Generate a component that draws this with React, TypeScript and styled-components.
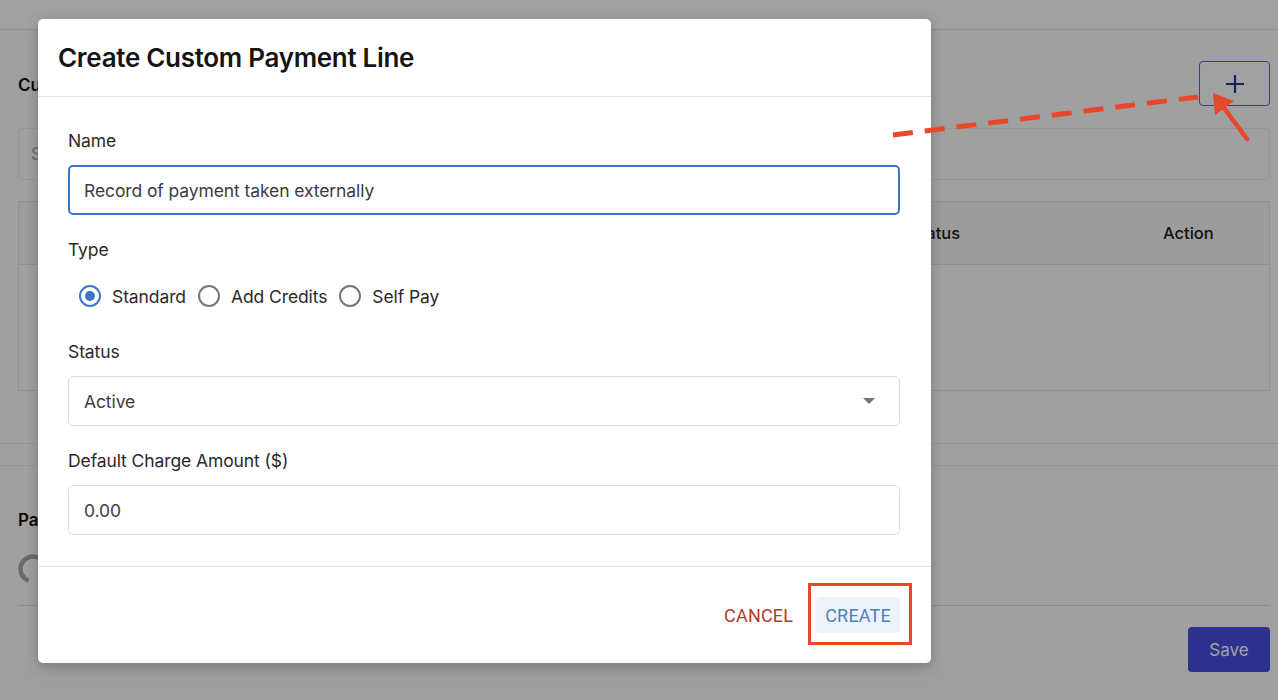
import React from "react";
import styled, { createGlobalStyle } from "styled-components";

const Global = createGlobalStyle`
  html, body { margin: 0; padding: 0; }
  body { font-family: Inter, "Noto Sans", sans-serif; background: #fff; }
  #root { width: 1278px; height: 700px; overflow: hidden; position: relative; }
`;

const Page = styled.div`
  width: 1278px;
  height: 700px;
  background: #fcfcfc;
  display: flex;
  flex-direction: column;
  color: #111;
`;

const TopBar = styled.div`
  height: 29px;
  flex: none;
  background: #ffffff;
  border-bottom: 1px solid #e6e6e6;
`;

const Section = styled.section<{ $pt: number; $pb: number }>`
  padding: ${(p) => p.$pt}px 8px ${(p) => p.$pb}px 18px;
  display: flex;
  flex-direction: column;
  background: #fdfdfd;
`;

const Band = styled.div`
  height: 21px;
  background: #fefefe;
  border-top: 1px solid #ececec;
  border-bottom: 1px solid #ececec;
`;

const HeadRow = styled.div`
  display: flex;
  align-items: center;
  justify-content: space-between;
  height: 45px;
`;

const SectionTitle = styled.div`
  font-size: 17px;
  font-weight: 600;
  margin-top: 2px;
`;

const PlusButton = styled.button`
  width: 71px;
  height: 45px;
  border: 1px solid #5a66d8;
  border-radius: 4px;
  background: #fff;
  display: flex;
  align-items: center;
  justify-content: center;
  padding: 0;
  color: #2b2f9e;
`;

const Search = styled.div`
  margin-top: 22px;
  height: 52px;
  box-sizing: border-box;
  border: 1px solid #ececec;
  border-radius: 3px;
  background: #fefefe;
  display: flex;
  align-items: center;
  padding-left: 12px;
  font-size: 17px;
  color: #aaa;
`;

const Table = styled.div`
  margin-top: 21px;
  height: 190px;
  box-sizing: border-box;
  border: 1px solid #e4e4e4;
  display: flex;
  flex-direction: column;
`;

const TableHead = styled.div`
  height: 62px;
  background: #f7f7f7;
  border-bottom: 1px solid #e6e6e6;
  display: grid;
  grid-template-columns: 1fr 253px 106px;
  align-items: center;
  font-size: 16.5px;
  font-weight: 500;
  color: #222;
`;

const SpinnerRow = styled.div`
  margin-top: 24px;
  height: 30px;
  display: flex;
  align-items: center;
`;

const Divider = styled.div`
  margin-top: 21px;
  border-top: 1px solid #e0e0e0;
`;

const SaveRow = styled.div`
  margin-top: 21px;
  display: flex;
  justify-content: flex-end;
`;

const SaveButton = styled.button`
  width: 82px;
  height: 45px;
  border: none;
  border-radius: 4px;
  background: #474ee2;
  color: #fff;
  font-family: Inter, sans-serif;
  font-size: 17px;
`;

const Overlay = styled.div`
  position: absolute;
  inset: 0;
  background: rgba(0, 0, 0, 0.37);
`;

const Modal = styled.div`
  position: absolute;
  left: 38px;
  top: 19px;
  width: 893px;
  height: 644px;
  background: #fff;
  border-radius: 5px;
  box-shadow: 0 4px 14px rgba(0, 0, 0, 0.25);
  display: flex;
  flex-direction: column;
`;

const ModalHeader = styled.div`
  height: 77px;
  flex: none;
  border-bottom: 1px solid #e2e2e2;
  display: flex;
  align-items: center;
  padding-left: 20px;
`;

const ModalTitle = styled.h2`
  margin: 0;
  font-size: 26px;
  font-weight: 600;
  letter-spacing: -0.3px;
  color: #141414;
`;

const ModalBody = styled.div`
  flex: 1;
  padding: 34px 31px 0 30px;
  display: flex;
  flex-direction: column;
  gap: 25px;
`;

const Field = styled.div<{ $gap?: number }>`
  display: flex;
  flex-direction: column;
  gap: ${(p) => p.$gap ?? 14}px;
`;

const Label = styled.label`
  font-size: 17.5px;
  line-height: 20px;
  color: #2a2a2a;
  letter-spacing: -0.1px;
`;

const InputBox = styled.div<{ $focused?: boolean }>`
  height: 50px;
  box-sizing: border-box;
  border: ${(p) => (p.$focused ? "2px solid #3d76c4" : "1px solid #dcdcdc")};
  border-radius: 5px;
  display: flex;
  align-items: center;
  justify-content: space-between;
  padding: 0 ${(p) => (p.$focused ? 23 : 24)}px 0 ${(p) => (p.$focused ? 14 : 15)}px;
  font-size: 17.5px;
  color: #3c3c3c;
  letter-spacing: -0.1px;
`;

const RadioRow = styled.div`
  display: flex;
  align-items: center;
  height: 42px;
  padding-left: 11px;
`;

const RadioOption = styled.div`
  display: flex;
  align-items: center;
  gap: 11px;
  margin-right: 12px;
  font-size: 17.5px;
  color: #2a2a2a;
  letter-spacing: -0.1px;
`;

const RadioCircle = styled.span<{ $on?: boolean }>`
  width: 22px;
  height: 22px;
  box-sizing: border-box;
  border-radius: 50%;
  border: 2px solid ${(p) => (p.$on ? "#3d76c4" : "#777")};
  display: flex;
  align-items: center;
  justify-content: center;
  &::after {
    content: "";
    width: 10px;
    height: 10px;
    border-radius: 50%;
    background: ${(p) => (p.$on ? "#3d76c4" : "transparent")};
  }
`;

const Caret = styled.span`
  width: 0;
  height: 0;
  border-left: 6px solid transparent;
  border-right: 6px solid transparent;
  border-top: 6px solid #757575;
`;

const ModalFooter = styled.div`
  height: 96px;
  flex: none;
  border-top: 1px solid #e2e2e2;
  display: flex;
  align-items: center;
  justify-content: flex-end;
  gap: 15px;
  padding-right: 31px;
`;

const TextButton = styled.button<{ $tone: "cancel" | "create" }>`
  height: 36px;
  border: none;
  border-radius: 4px;
  padding: 0 ${(p) => (p.$tone === "create" ? 9 : 8)}px;
  background: ${(p) => (p.$tone === "create" ? "#eef3f9" : "transparent")};
  color: ${(p) => (p.$tone === "create" ? "#4a7fc4" : "#b33a2e")};
  font-family: Roboto, "Liberation Sans", sans-serif;
  font-size: 18px;
  letter-spacing: 0.2px;
`;

const Annotation = styled.svg`
  position: absolute;
  left: 0;
  top: 0;
  width: 1278px;
  height: 700px;
  pointer-events: none;
`;

export default function App() {
  return (
    <>
      <Global />
      <Page>
        <TopBar />
        <Section $pt={31} $pb={52}>
          <HeadRow>
            <SectionTitle>Custom Payment Lines</SectionTitle>
            <PlusButton aria-label="add">
              <svg width="22" height="22" viewBox="0 0 22 22">
                <path d="M11 2v18M2 11h18" stroke="currentColor" strokeWidth="2.2" />
              </svg>
            </PlusButton>
          </HeadRow>
          <Search>Search</Search>
          <Table>
            <TableHead>
              <span />
              <span>Status</span>
              <span>Action</span>
            </TableHead>
          </Table>
        </Section>
        <Band />
        <Section $pt={42} $pb={0}>
          <SectionTitle>Payment Settings</SectionTitle>
          <SpinnerRow>
            <svg width="30" height="30" viewBox="0 0 30 30">
              <circle cx="15" cy="15" r="12.5" fill="none" stroke="#a8a8a8" strokeWidth="4.5" strokeDasharray="52 100" transform="rotate(110 15 15)" />
            </svg>
          </SpinnerRow>
          <Divider />
          <SaveRow>
            <SaveButton>Save</SaveButton>
          </SaveRow>
        </Section>
      </Page>
      <Overlay />
      <Modal role="dialog">
        <ModalHeader>
          <ModalTitle>Create Custom Payment Line</ModalTitle>
        </ModalHeader>
        <ModalBody>
          <Field>
            <Label>Name</Label>
            <InputBox $focused>Record of payment taken externally</InputBox>
          </Field>
          <Field $gap={15}>
            <Label>Type</Label>
            <RadioRow>
              <RadioOption>
                <RadioCircle $on />
                Standard
              </RadioOption>
              <RadioOption>
                <RadioCircle />
                Add Credits
              </RadioOption>
              <RadioOption>
                <RadioCircle />
                Self Pay
              </RadioOption>
            </RadioRow>
          </Field>
          <Field>
            <Label>Status</Label>
            <InputBox>
              Active
              <Caret />
            </InputBox>
          </Field>
          <Field>
            <Label>Default Charge Amount ($)</Label>
            <InputBox>0.00</InputBox>
          </Field>
        </ModalBody>
        <ModalFooter>
          <TextButton $tone="cancel">CANCEL</TextButton>
          <TextButton $tone="create">CREATE</TextButton>
        </ModalFooter>
      </Modal>
      <Annotation viewBox="0 0 1278 700">
        <line x1="893" y1="135" x2="1198" y2="97" stroke="#e8472a" strokeWidth="5" strokeDasharray="20 12" />
        <line x1="1247" y1="139" x2="1224" y2="108" stroke="#e8472a" strokeWidth="4.5" strokeLinecap="round" />
        <polygon points="1213,93 1215,115 1234,101" fill="#e8472a" />
        <rect x="809.5" y="584.5" width="101" height="59" fill="none" stroke="#e8472a" strokeWidth="3" />
      </Annotation>
    </>
  );
}
